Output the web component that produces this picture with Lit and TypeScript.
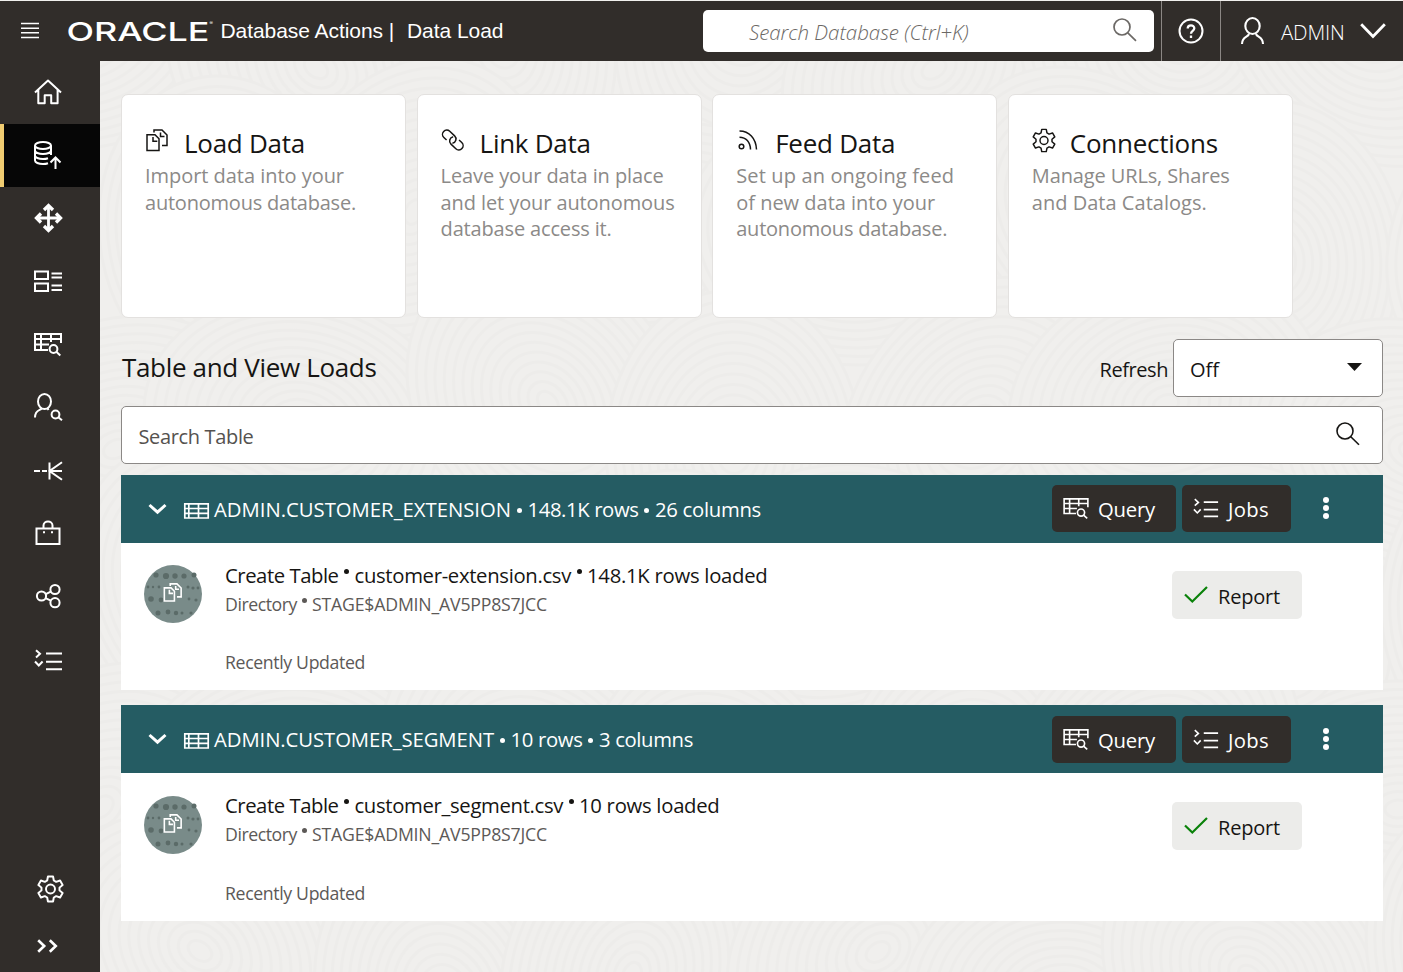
import { LitElement, html, css, svg } from "lit";
import { customElement, property } from "lit/decorators.js";

/** A single line of text whose tracking is set so that it spans a given width. */
@customElement("fit-text")
class FitText extends LitElement {
  @property({ type: Number }) w = 0;
  @property() text = "";
  static styles = css`
    :host { display: inline-block; white-space: pre; flex: none; }
    .t { display: inline-block; white-space: pre; }
  `;
  updated() {
    const el = this.renderRoot.querySelector(".t") as HTMLElement;
    el.style.letterSpacing = "0px";
    const natural = el.getBoundingClientRect().width;
    const step = (this.w - natural) / this.text.length;
    el.style.letterSpacing = `${step}px`;
  }
  render() {
    return html`<span class="t">${this.text}</span>`;
  }
}

const t = (text: string, w: number) => html`<fit-text .text=${text} .w=${w}></fit-text>`;

const gear = svg`<path d="M11.2 1.2h5.2l.8 4.1 2.4 1.4 4-1.4 2.6 4.5-3.2 2.8v2.8l3.2 2.8-2.6 4.5-4-1.4-2.4 1.4-.8 4.1h-5.2l-.8-4.1L8 21.300l-4 1.400-2.600-4.500 3.200-2.800v-2.800L1.400 9.800 4 5.300l4 1.400 2.400-1.400z" stroke-linejoin="round"/><circle cx="13.800" cy="14" r="4.600"/>`;
const tableSearch = svg`<path d="M14 17H1V1h26v9M1 6h26M1 11.500h14M7 1v16M17 1v8"/><circle cx="19.500" cy="16" r="3.900"/><path d="M22.300 18.800l4 3.600"/>`;
const jobs = svg`<path d="M2 1.200l4 3.600-4 3.600M1 12.500l3.800 4 3.800-4M12 4.500h16M12 12.800h16M12 20.300h16"/>`;
const files = svg`<path d="M1 5.800h8l4 4V21.500H1zM7 8v4.300h4.300M8 3.500V1h8l5 5v10.500h-5M14.500 3.500V7.500h4"/>`;

const icon = (body: unknown, w: number, h: number, vw = w, vh = h, sw = 2) =>
  html`<svg class="ic" width=${w} height=${h} viewBox="0 0 ${vw} ${vh}" fill="none" stroke="currentColor" stroke-width=${sw}>${body}</svg>`;

const NAV = [
  icon(svg`<path d="M1 13.500L14 1.500l13 12M4.300 11v13.200h6.400v-8h6.500v8h6.400V11" stroke-linejoin="round"/>`, 28, 28),
  icon(svg`<ellipse cx="9" cy="4.500" rx="8" ry="3.500"/><path d="M1 4.500v15c0 2 3.500 3.500 8 3.500 2 0 3.700-.3 5-.8M17 4.500V14M1 9.500C1 11.500 4.500 13 9 13s8-1.500 8-3.500M1 14.500c0 2 3.500 3.500 8 3.500 2 0 3.700-.3 5-.8M21.500 28V17M16.500 21.500l5-5 5 5"/>`, 28, 29),
  icon(svg`<path d="M13.500 2v24M2 14h23" stroke-width="2.800"/><path d="M9 6l4.500-4.500L18 6M9 22l4.500 4.500L18 22M6 9.500L1.500 14 6 18.500M21 9.500l4.500 4.500-4.500 4.500" stroke-width="3.300"/>`, 27, 29),
  icon(svg`<path d="M1 1.500h13v7.500H1zM1 13.500h13V21H1zM17.500 3.500H28M17.500 7.500H28M17.500 15.500H28M17.500 20H28"/>`, 28, 23),
  icon(tableSearch, 28, 23, 28, 23),
  icon(svg`<ellipse cx="10.500" cy="8.500" rx="6.500" ry="7.500"/><path d="M7.500 15.500c-1 2-6.500 1-6.500 9M13.500 15l1 2"/><circle cx="21.500" cy="21.500" r="3.900"/><path d="M24.300 24.300l3.700 3"/>`, 28, 29),
  icon(svg`<path d="M0 10h6M8 10h5M15.500 1.500v17M15.500 10H28M28 1.200L15.500 10 28 18.800"/>`, 28, 20),
  icon(svg`<path d="M1.500 8.500h23V24h-23zM8.500 8V5.500c0-5.500 9-5.500 9 0V8M8 12.300h2M16 12.300h2"/>`, 26, 27),
  icon(svg`<circle cx="5.500" cy="12" r="4.600"/><circle cx="19" cy="5.500" r="4.600"/><circle cx="19" cy="18.700" r="4.600"/><path d="M9.800 10.200l5-2.600M9.500 14.200l5.400 2.500"/>`, 24, 25),
  icon(jobs, 28, 22, 28, 22),
];

const CARDS = [
  { icon: icon(files, 22, 23, 22, 23, 1.5), title: ["Load Data", 121], gap: 16,
    lines: [["Import data into your", 199], ["autonomous database.", 211]] },
  { icon: icon(svg`<g transform="translate(10.800 11) rotate(43)"><path d="M-4.500 4.300H-8.200a4.300 4.300 0 0 1 0-8.600H-1.500a4.300 4.300 0 0 1 3.400 6.900"/><path d="M4.500-4.300H8.200a4.300 4.300 0 0 1 0 8.600H1.500a4.300 4.300 0 0 1-3.400-6.900"/></g>`, 22, 23, 22, 23, 1.5), title: ["Link Data", 111], gap: 16,
    lines: [["Leave your data in place", 223], ["and let your autonomous", 234], ["database access it.", 171]] },
  { icon: icon(svg`<circle cx="4.500" cy="17.500" r="2.300"/><path d="M2.500 2C12 2 19 9 19.500 20.500M2.500 8.300C9 8.300 13.300 13 13.500 20.500"/>`, 22, 23, 22, 23, 1.5), title: ["Feed Data", 120], gap: 16,
    lines: [["Set up an ongoing feed", 218], ["of new data into your", 199], ["autonomous database.", 211]] },
  { icon: icon(gear, 24, 25, 27.600, 28, 1.700), title: ["Connections", 148], gap: 14,
    lines: [["Manage URLs, Shares", 198], ["and Data Catalogs.", 175]] },
] as any[];

const LOADS = [
  { name: ["ADMIN.CUSTOMER_EXTENSION", 297], rows: ["148.1K rows", 111], cols: ["26 columns", 106],
    file: ["customer-extension.csv", 216.5], loaded: ["148.1K rows loaded", 180] },
  { name: ["ADMIN.CUSTOMER_SEGMENT", 280], rows: ["10 rows", 72], cols: ["3 columns", 94],
    file: ["customer_segment.csv", 208.5], loaded: ["10 rows loaded", 140] },
] as any[];

/** Faint overlapping ripples used behind the content; each set covers the ones under it. */
const ripples = () => {
  const cells: number[][] = [];
  for (let r = 0; r < 6; r++)
    for (let c = 0; c < 7; c++)
      cells.push([c * 215 + (r % 2) * 105 + ((r * 53 + c * 31) % 60) - 30, r * 185 + ((c * 47 + r * 29) % 70) - 40]);
  return svg`${cells.map(([x, y], i) => svg`<g transform="translate(${x} ${y}) rotate(${(i * 37) % 180})">${
    Array.from({ length: 15 }, (_, k) => svg`<ellipse rx=${160 - k * 10.5} ry=${128 - k * 8.5}/>`)}</g>`)}`;
};

const DOTS = [[12, 10, 2.6], [22, 11, 3.1], [31, 11, 2.7], [40, 11, 2.6], [50, 10, 2.5], [4, 22, 1.4], [9, 22, 1.2], [15, 22, 1.4], [44, 22, 1.5], [49, 23, 1.6], [54, 23, 1.4], [7, 34, 2.8], [17, 35, 2.4], [45, 34, 1.4], [52, 35, 1.6], [14, 48, 2.5], [24, 47, 2.4], [32, 48, 2.2], [38, 48, 1.5], [47, 48, 1.6]];

@customElement("app-root")
class AppRoot extends LitElement {
  static styles = css`
    :host { display: block; width: 1403px; height: 972px; overflow: hidden; box-sizing: border-box; border-top: 1px solid #f1f0ee;
      font-family: "Open Sans", "Noto Sans", sans-serif; color: #161513; background: #f0efed; }
    * { box-sizing: border-box; }
    .ic { display: block; flex: none; overflow: visible; }
    header { height: 60px; background: #312d2a; color: #fff; display: flex; align-items: center; }
    .burger { margin-left: 21px; }
    .logo { margin-left: 28px; flex: none; overflow: visible; }
    .title { margin-left: 5.500px; font: 21px/30px "Liberation Sans", Arial, sans-serif; display: flex; width: 482.500px; }
    .bar { width: 7px; margin: 0 12px 0 5px; text-align: center; }
    .gsearch { width: 451px; height: 42px; border-radius: 5px; background: #fff; color: #6b6865; display: flex; align-items: center; padding: 2px 17px 0 46px; justify-content: space-between; font: italic 300 20.500px/30px "Open Sans", sans-serif; }
    .gsearch svg { margin-top: -4px; }
    .help { margin-left: 7px; width: 60px; height: 60px; border: solid #8b8784; border-width: 0 1px; display: flex; align-items: center; justify-content: center; }
    .help svg { margin-top: -1px; }
    .user { display: flex; align-items: center; padding-left: 20px; font-size: 20.500px; font-weight: 300; }
    .user fit-text { margin: 2px 15px 0 17px; }
    .user svg { margin-top: -1px; }
    .body { display: flex; height: 911px; }
    nav { width: 100px; flex: none; background: #312d2a; color: #fff; display: flex; flex-direction: column; }
    .item { height: 63px; display: flex; align-items: center; justify-content: center; padding-right: 4px; flex: none; }
    .item.on { background: #060606; border-left: 4px solid #f0cc71; padding-right: 8px; }
    .foot { margin-top: auto; height: 115px; display: flex; flex-direction: column; align-items: flex-start; }
    .foot .ic:first-child { margin-left: 37px; margin-top: 18px; }
    .foot .ic:last-child { margin: 36px 0 0 37px; }
    main { flex: 1; display: grid; min-width: 0; }
    .bg { grid-area: 1 / 1; }
    .content { grid-area: 1 / 1; padding: 33px 20px 0 21px; z-index: 1; }
    .cards { display: flex; gap: 10.600px; height: 224px; }
    .card { width: 285px; background: #fff; border: 1px solid #e3e1df; border-radius: 7px; padding: 30px 0 0 23px; }
    .chead { display: flex; align-items: flex-start; }
    .chead .ic { margin: 4px 0 0 1px; }
    .card:last-child .ic { margin: 3px 0 0 0; }
    .chead h3 { margin: 0; font-weight: 400; font-size: 26px; line-height: 36px; }
    .desc { display: flex; flex-direction: column; font-size: 20px; line-height: 26.700px; color: #8c8a88; margin-top: 2px; }
    .desc fit-text { display: block; }
    .toolbar { margin-top: 21px; display: flex; align-items: center; height: 58px; }
    .toolbar h2 { margin: -2px auto 0 1px; font-weight: 400; font-size: 26px; line-height: 36px; }
    .lbl { font-size: 20px; line-height: 28px; margin: 3px 5px 0 0; }
    .select, .search { height: 58px; background: #fff; border: 1px solid #8b8886; border-radius: 5px; display: flex; align-items: center; justify-content: space-between; font-size: 20px; line-height: 28px; }
    .select { width: 210px; padding: 3px 20px 0 16px; }
    .select .ic { margin-top: -6px; }
    .search { margin-top: 9px; padding: 3px 22.500px 0 16.500px; color: #55524f; }
    .search .ic { color: #161513; margin-top: -6px; }
    .panel { margin-top: 11px; background: #fff; height: 215px; }
    .panel + .panel { margin-top: 15px; height: 216px; }
    .phead { height: 68px; background: #255c63; color: #fff; display: flex; align-items: center; padding-left: 27px; font-size: 20.300px; line-height: 28px; }
    .phead > .grid { margin: 3px 5px 0 17px; }
    .dot { width: 16.500px; display: flex; justify-content: center; align-items: center; flex: none; }
    .dot::before { content: ""; width: 5px; height: 5px; border-radius: 50%; background: currentColor; }
    .phead .dot { margin-top: 2px; }
    .btn { height: 47px; border-radius: 5px; background: #312d2a; display: flex; align-items: flex-start; padding: 10px 0 0 11px; margin: -1px 6px 0 0; }
    .panel + .panel .btn { margin-top: 0; }
    .btn .ic { margin-top: 3px; margin-right: 9px; }
    .btn.q { width: 124px; margin-left: auto; }
    .btn.j { width: 109px; margin-right: 31.500px; }
    .more { margin: -2px 53.500px 0 0; }
    .panel + .panel .more { margin-top: 0; }
    .row { display: flex; padding: 22px 81px 0 23px; align-items: flex-start; }
    .panel + .panel .row { padding-top: 23px; }
    .info { margin: -6px auto 0 23px; }
    .panel + .panel .info { margin-top: -7px; }
    .l1, .l2, .l3 { display: flex; }
    .l1 { font-size: 20.300px; line-height: 32px; }
    .l2, .l3 { font-size: 17.700px; line-height: 28px; color: #5c5957; margin-top: -1px; }
    .l3 { margin-top: 30px; }
    .panel + .panel .l3 { margin-top: 31px; }
    .l1 .dot { width: 16px; margin-top: -7px; }
    .l2 .dot { width: 15px; margin-top: -7px; }
    .report { width: 130px; height: 48px; background: #ececea; border-radius: 5px; margin-top: 6px; display: flex; align-items: flex-start; padding: 12px 0 0 12px; font-size: 20px; line-height: 28px; }
    .report .ic { margin: 3px 10px 0 0; }
  `;

  card(c: any) {
    return html`<section class="card">
      <div class="chead">${c.icon}<h3 style="margin-left:${c.gap}px">${t(c.title[0], c.title[1])}</h3></div>
      <div class="desc">${c.lines.map((l: any) => t(l[0], l[1]))}</div>
    </section>`;
  }

  load(d: any) {
    return html`<section class="panel">
      <div class="phead">
        ${icon(svg`<path d="M1.500 2l8 7.200 8-7.200"/>`, 19, 12, 19, 12, 3)}
        <svg class="ic grid" width="25" height="16" viewBox="0 0 25 16" fill="none" stroke="#fff" stroke-width="1.700"><path d="M.8.800h23.400v14.200H.8zM.8 5.500h23.400M.8 10.300h23.400M4.800.800V15M14.500.800V15"/></svg>
        ${t(d.name[0], d.name[1])}<span class="dot"></span>${t(d.rows[0], d.rows[1])}<span class="dot"></span>${t(d.cols[0], d.cols[1])}
        <div class="btn q">${icon(tableSearch, 26, 21, 28, 23, 1.800)}${t("Query", 57)}</div>
        <div class="btn j">${icon(jobs, 26, 20, 29, 22, 1.800)}${t("Jobs", 41)}</div>
        <svg class="ic more" width="7" height="22" viewBox="0 0 7 22" fill="#fff"><circle cx="3" cy="3" r="3"/><circle cx="3" cy="11" r="3"/><circle cx="3" cy="19" r="3"/></svg>
      </div>
      <div class="row">
        <svg class="ic" width="58" height="58" viewBox="0 0 58 58">
          <circle cx="29" cy="29" r="29" fill="#798b89"/>
          <g fill="#5b6b68">${DOTS.map(([x, y, r]) => svg`<circle cx=${x} cy=${y} r=${r}/>`)}</g>
          <g transform="translate(19.500 18) scale(.84)" fill="none" stroke="#fff" stroke-width="1.900">${files}</g>
        </svg>
        <div class="info">
          <div class="l1">${t("Create Table", 113.500)}<span class="dot"></span>${t(d.file[0], d.file[1])}<span class="dot"></span>${t(d.loaded[0], d.loaded[1] + 0.5)}</div>
          <div class="l2">${t("Directory", 72)}<span class="dot"></span>${t("STAGE$ADMIN_AV5PP8S7JCC", 235)}</div>
          <div class="l3">${t("Recently Updated", 140)}</div>
        </div>
        <div class="report"><svg class="ic" width="24" height="17" viewBox="0 0 24 17" fill="none" stroke="#0a820a" stroke-width="2.200"><path d="M1 8.500l7.300 7L23 1"/></svg>${t("Report", 62)}</div>
      </div>
    </section>`;
  }

  render() {
    return html`
      <header>
        <svg class="ic burger" width="18" height="18" viewBox="0 0 18 18" fill="none" stroke="#fff" stroke-width="1.500"><path d="M0 1.500h18M0 6.200h18M0 10.800h18M0 15.500h18"/></svg>
        <svg class="logo" width="148" height="30" viewBox="0 0 148 30" fill="#fff" font-family="Inter, sans-serif">
          <text x="-.5" y="24.500" font-size="26.300" font-weight="500" textLength="143" lengthAdjust="spacingAndGlyphs">ORACLE</text>
          <text x="142.500" y="9" font-size="5">®</text>
        </svg>
        <div class="title">${t("Database Actions", 162.500)}<span class="bar">|</span>${t("Data Load", 96.500)}</div>
        <div class="gsearch">${t("Search Database (Ctrl+K)", 219.500)}${icon(svg`<circle cx="9" cy="9" r="8"/><path d="M14.800 14.800l8.200 8"/>`, 24, 24, 24, 24, 1.700)}</div>
        <div class="help"><svg class="ic" width="26" height="26" viewBox="0 0 26 26" fill="none" stroke="#fff" stroke-width="2"><circle cx="13" cy="13" r="11.500"/><path d="M9.700 10.500c0-4.300 6.600-4.200 6.600-.2 0 2.700-3.300 2.500-3.300 5.500" stroke-width="2.300"/><path d="M13 17.500v2.500" stroke-width="2.300"/></svg></div>
        <div class="user">
          ${icon(svg`<ellipse cx="11.500" cy="9" rx="7.200" ry="8"/><path d="M1 27c0-8 7-6.500 7-10.500M22 27c0-8-7-6.500-7-10.500"/>`, 23, 27, 23, 27, 2.100)}
          ${t("ADMIN", 63.500)}
          ${icon(svg`<path d="M1.200 1.200L13 13.500 24.800 1.200"/>`, 26, 15, 26, 15, 2.800)}
        </div>
      </header>
      <div class="body">
        <nav>
          ${NAV.map((n, i) => html`<div class="item ${i === 1 ? "on" : ""}">${n}</div>`)}
          <div class="foot">
            ${icon(gear, 27, 28, 27.600, 28, 2)}
            ${icon(svg`<path d="M1.200 1.200l6 5.800-6 5.800M12.800 1.200l6 5.800-6 5.800"/>`, 21, 14, 21, 14, 2.600)}
          </div>
        </nav>
        <main>
          <svg class="bg" width="1303" height="911" fill="#f0efed" stroke="#edecea" stroke-width="3">${ripples()}</svg>
          <div class="content">
            <div class="cards">${CARDS.map((c) => this.card(c))}</div>
            <div class="toolbar">
              <h2>${t("Table and View Loads", 254.500)}</h2>
              <span class="lbl">${t("Refresh", 68.500)}</span>
              <div class="select">${t("Off", 29)}<svg class="ic" width="15" height="8" viewBox="0 0 15 8"><path d="M0 0h15L7.500 8z" fill="#161513"/></svg></div>
            </div>
            <div class="search">${t("Search Table", 115)}${icon(svg`<circle cx="9" cy="9" r="8"/><path d="M14.800 14.800l8.200 8"/>`, 24, 24, 24, 24, 1.600)}</div>
            <div>${LOADS.map((d) => this.load(d))}</div>
          </div>
        </main>
      </div>
    `;
  }
}
